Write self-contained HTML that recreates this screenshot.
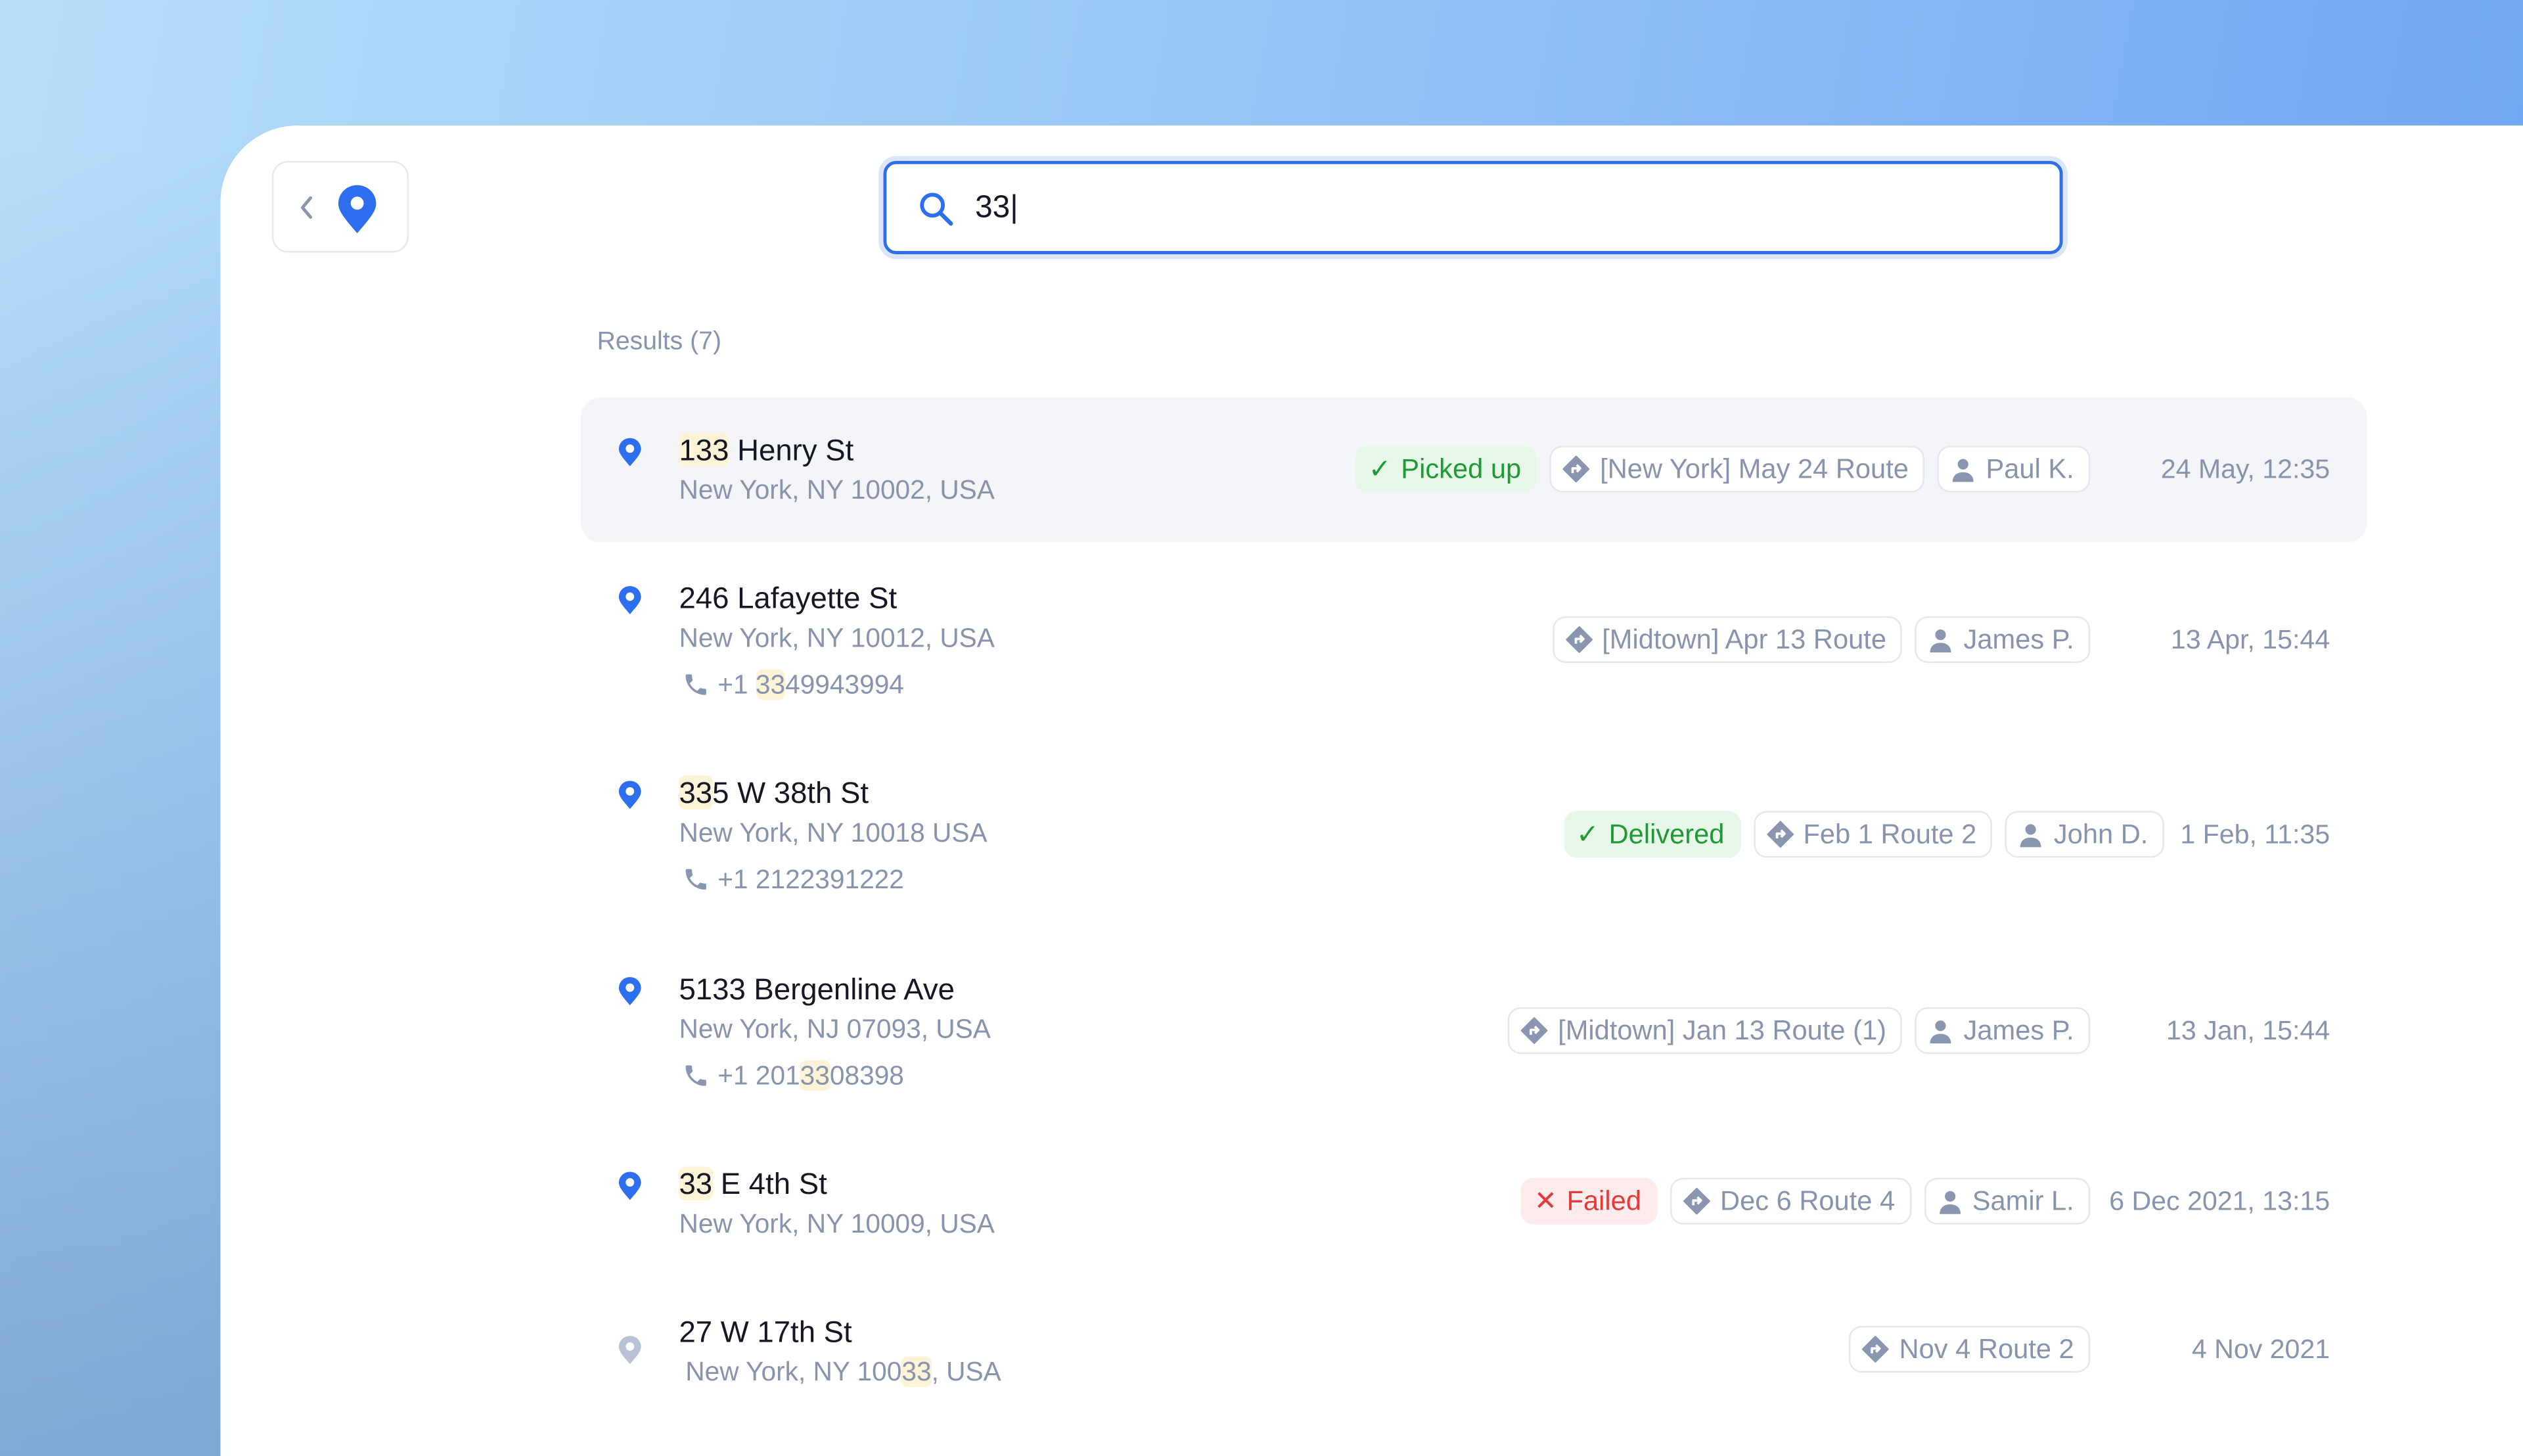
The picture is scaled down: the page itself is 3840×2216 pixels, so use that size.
<!DOCTYPE html>
<html><head><meta charset="utf-8"><style>
html,body{margin:0;padding:0;width:3840px;height:2216px;overflow:hidden}
body{font-family:"Liberation Sans",sans-serif}
#s{position:absolute;left:0;top:0;width:1568px;height:905px;transform:scale(2.44898);transform-origin:0 0;overflow:hidden;
background:linear-gradient(100deg,#b5def9 0%,#9cc8f7 40%,#6ca2f2 100%)}
#shade{position:absolute;left:0;top:0;width:1568px;height:905px;background:linear-gradient(180deg,rgba(0,0,0,0) 10%,rgba(60,100,160,.4) 100%)}
#card{position:absolute;left:137px;top:78px;width:1431px;height:827px;background:#fff;border-top-left-radius:48px}
.abs{position:absolute}
.back{left:169px;top:100px;width:85px;height:57px;border:1.5px solid #e6e9f1;border-radius:10px;box-sizing:border-box}
.search{left:549px;top:100px;width:733px;height:58px;border:2px solid #2f6fea;border-radius:8px;box-sizing:border-box;box-shadow:0 0 0 3px #dbe6fb}
.res{left:371px;top:204px;font-size:16px;color:#8893ad}
.hl{left:361px;top:247px;width:1110px;height:90px;background:#f4f5f9;border-radius:12px}
.t{font-size:18.6px;color:#151824;white-space:nowrap}
.sub{font-size:16.6px;color:#8893ad;white-space:nowrap}
.mk{background:#fdf3d6;border-radius:4px}
.tags{position:absolute;right:269px;display:flex;gap:8px;height:29px;align-items:center}
.tag{height:29px;box-sizing:border-box;border:1.5px solid #e4e8f0;border-radius:8px;padding:0 9px 0 7px;display:flex;align-items:center;gap:6px;font-size:17px;color:#8893ad;white-space:nowrap;background:#fff}
.ok{background:#e7f7e8;border-color:#e7f7e8;color:#1f9a36}
.bad{background:#fdeceb;border-color:#fdeceb;color:#e5393a}
.date{position:absolute;right:120px;font-size:16.8px;color:#8893ad;white-space:nowrap;text-align:right}
.pin{position:absolute;left:384px}
</style></head><body>
<div id="s">
<div id="shade"></div>
<div id="card"></div>
<div class="abs back">
 <svg class="abs" style="left:16px;top:20px" width="10" height="16" viewBox="0 0 10 16"><path d="M7 2 L2 8 L7 14" fill="none" stroke="#8a96b0" stroke-width="2" stroke-linecap="round" stroke-linejoin="round"/></svg>
 <svg class="abs" style="left:39px;top:13px" width="26" height="32" viewBox="0 0 24 30"><path d="M12 1C5.9 1 1 5.8 1 11.7c0 4.5 3.5 8.6 11 17.3 7.5-8.7 11-12.8 11-17.3C23 5.8 18.1 1 12 1z" fill="#2d6ff0"/><circle cx="12" cy="11.5" r="3.8" fill="#fff"/></svg>
</div>
<div class="abs search">
 <svg class="abs" style="left:20px;top:17px" width="22" height="22" viewBox="0 0 22 22"><circle cx="8.5" cy="8.5" r="6.5" fill="none" stroke="#2d6ff0" stroke-width="2.4"/><path d="M13.5 13.5L20 20" stroke="#2d6ff0" stroke-width="2.6" stroke-linecap="round"/></svg>
 <div class="abs" style="left:55px;top:16px;font-size:19.5px;color:#151824">33<span style="font-weight:300">|</span></div>
</div>
<div class="abs res">Results (7)</div>
<div class="abs hl"></div>

<!-- Row 1 -->
<svg class="pin" style="top:271px" width="15" height="20" viewBox="0 0 24 30"><path d="M12 1C5.9 1 1 5.8 1 11.7c0 4.5 3.5 8.6 11 17.3 7.5-8.7 11-12.8 11-17.3C23 5.8 18.1 1 12 1z" fill="#2d6ff0"/><circle cx="12" cy="11.5" r="4.2" fill="#fff"/></svg>
<div class="abs t" style="left:422px;top:269px"><span class="mk">133</span> Henry St</div>
<div class="abs sub" style="left:422px;top:295px">New York, NY 10002, USA</div>
<div class="tags" style="top:277px">
 <div class="tag ok"><span>✓</span>Picked up</div>
 <div class="tag"><svg width="17" height="17" viewBox="0 0 20 20"><path d="M10 1L19 10 10 19 1 10z" fill="#8a96b0" stroke="#8a96b0" stroke-linejoin="round" stroke-width="1.5"/><path d="M7.5 13v-3.5h5M10.5 7l2.5 2.5-2.5 2.5" fill="none" stroke="#fff" stroke-width="1.8" stroke-linejoin="round"/></svg>[New York] May 24 Route</div>
 <div class="tag"><svg width="16" height="16" viewBox="0 0 16 16"><circle cx="8" cy="4.5" r="3.3" fill="#8a96b0"/><path d="M1.5 15.5c0-4 2.8-6 6.5-6s6.5 2 6.5 6z" fill="#8a96b0"/></svg>Paul K.</div>
</div>
<div class="date" style="top:282px">24 May, 12:35</div>

<!-- Row 2 -->
<svg class="pin" style="top:363px" width="15" height="20" viewBox="0 0 24 30"><path d="M12 1C5.9 1 1 5.8 1 11.7c0 4.5 3.5 8.6 11 17.3 7.5-8.7 11-12.8 11-17.3C23 5.8 18.1 1 12 1z" fill="#2d6ff0"/><circle cx="12" cy="11.5" r="4.2" fill="#fff"/></svg>
<div class="abs t" style="left:422px;top:361px">246 Lafayette St</div>
<div class="abs sub" style="left:422px;top:387px">New York, NY 10012, USA</div>
<div class="abs sub" style="left:424px;top:416px"><svg width="17" height="17" viewBox="0 0 24 24" style="vertical-align:-3px;margin-right:5px"><path d="M6.6 10.8c1.4 2.8 3.8 5.1 6.6 6.6l2.2-2.2c.3-.3.7-.4 1-.2 1.1.4 2.3.6 3.6.6.6 0 1 .4 1 1V20c0 .6-.4 1-1 1C10.6 21 3 13.4 3 4c0-.6.4-1 1-1h3.5c.6 0 1 .4 1 1 0 1.3.2 2.5.6 3.6.1.3 0 .7-.2 1z" fill="#8a96b0"/></svg>+1 <span class="mk">33</span>49943994</div>
<div class="tags" style="top:383px">
 <div class="tag"><svg width="17" height="17" viewBox="0 0 20 20"><path d="M10 1L19 10 10 19 1 10z" fill="#8a96b0" stroke="#8a96b0" stroke-linejoin="round" stroke-width="1.5"/><path d="M7.5 13v-3.5h5M10.5 7l2.5 2.5-2.5 2.5" fill="none" stroke="#fff" stroke-width="1.8" stroke-linejoin="round"/></svg>[Midtown] Apr 13 Route</div>
 <div class="tag"><svg width="16" height="16" viewBox="0 0 16 16"><circle cx="8" cy="4.5" r="3.3" fill="#8a96b0"/><path d="M1.5 15.5c0-4 2.8-6 6.5-6s6.5 2 6.5 6z" fill="#8a96b0"/></svg>James P.</div>
</div>
<div class="date" style="top:388px">13 Apr, 15:44</div>

<!-- Row 3 -->
<svg class="pin" style="top:484px" width="15" height="20" viewBox="0 0 24 30"><path d="M12 1C5.9 1 1 5.8 1 11.7c0 4.5 3.5 8.6 11 17.3 7.5-8.7 11-12.8 11-17.3C23 5.8 18.1 1 12 1z" fill="#2d6ff0"/><circle cx="12" cy="11.5" r="4.2" fill="#fff"/></svg>
<div class="abs t" style="left:422px;top:482px"><span class="mk">33</span>5 W 38th St</div>
<div class="abs sub" style="left:422px;top:508px">New York, NY 10018 USA</div>
<div class="abs sub" style="left:424px;top:537px"><svg width="17" height="17" viewBox="0 0 24 24" style="vertical-align:-3px;margin-right:5px"><path d="M6.6 10.8c1.4 2.8 3.8 5.1 6.6 6.6l2.2-2.2c.3-.3.7-.4 1-.2 1.1.4 2.3.6 3.6.6.6 0 1 .4 1 1V20c0 .6-.4 1-1 1C10.6 21 3 13.4 3 4c0-.6.4-1 1-1h3.5c.6 0 1 .4 1 1 0 1.3.2 2.5.6 3.6.1.3 0 .7-.2 1z" fill="#8a96b0"/></svg>+1 2122391222</div>
<div class="tags" style="top:504px;right:223px">
 <div class="tag ok"><span>✓</span>Delivered</div>
 <div class="tag"><svg width="17" height="17" viewBox="0 0 20 20"><path d="M10 1L19 10 10 19 1 10z" fill="#8a96b0" stroke="#8a96b0" stroke-linejoin="round" stroke-width="1.5"/><path d="M7.5 13v-3.5h5M10.5 7l2.5 2.5-2.5 2.5" fill="none" stroke="#fff" stroke-width="1.8" stroke-linejoin="round"/></svg>Feb 1 Route 2</div>
 <div class="tag"><svg width="16" height="16" viewBox="0 0 16 16"><circle cx="8" cy="4.5" r="3.3" fill="#8a96b0"/><path d="M1.5 15.5c0-4 2.8-6 6.5-6s6.5 2 6.5 6z" fill="#8a96b0"/></svg>John D.</div>
</div>
<div class="date" style="top:509px">1 Feb, 11:35</div>

<!-- Row 4 -->
<svg class="pin" style="top:606px" width="15" height="20" viewBox="0 0 24 30"><path d="M12 1C5.9 1 1 5.8 1 11.7c0 4.5 3.5 8.6 11 17.3 7.5-8.7 11-12.8 11-17.3C23 5.8 18.1 1 12 1z" fill="#2d6ff0"/><circle cx="12" cy="11.5" r="4.2" fill="#fff"/></svg>
<div class="abs t" style="left:422px;top:604px">5133 Bergenline Ave</div>
<div class="abs sub" style="left:422px;top:630px">New York, NJ 07093, USA</div>
<div class="abs sub" style="left:424px;top:659px"><svg width="17" height="17" viewBox="0 0 24 24" style="vertical-align:-3px;margin-right:5px"><path d="M6.6 10.8c1.4 2.8 3.8 5.1 6.6 6.6l2.2-2.2c.3-.3.7-.4 1-.2 1.1.4 2.3.6 3.6.6.6 0 1 .4 1 1V20c0 .6-.4 1-1 1C10.6 21 3 13.4 3 4c0-.6.4-1 1-1h3.5c.6 0 1 .4 1 1 0 1.3.2 2.5.6 3.6.1.3 0 .7-.2 1z" fill="#8a96b0"/></svg>+1 201<span class="mk">33</span>08398</div>
<div class="tags" style="top:626px">
 <div class="tag"><svg width="17" height="17" viewBox="0 0 20 20"><path d="M10 1L19 10 10 19 1 10z" fill="#8a96b0" stroke="#8a96b0" stroke-linejoin="round" stroke-width="1.5"/><path d="M7.5 13v-3.5h5M10.5 7l2.5 2.5-2.5 2.5" fill="none" stroke="#fff" stroke-width="1.8" stroke-linejoin="round"/></svg>[Midtown] Jan 13 Route (1)</div>
 <div class="tag"><svg width="16" height="16" viewBox="0 0 16 16"><circle cx="8" cy="4.5" r="3.3" fill="#8a96b0"/><path d="M1.5 15.5c0-4 2.8-6 6.5-6s6.5 2 6.5 6z" fill="#8a96b0"/></svg>James P.</div>
</div>
<div class="date" style="top:631px">13 Jan, 15:44</div>

<!-- Row 5 -->
<svg class="pin" style="top:727px" width="15" height="20" viewBox="0 0 24 30"><path d="M12 1C5.9 1 1 5.8 1 11.7c0 4.5 3.5 8.6 11 17.3 7.5-8.7 11-12.8 11-17.3C23 5.8 18.1 1 12 1z" fill="#2d6ff0"/><circle cx="12" cy="11.5" r="4.2" fill="#fff"/></svg>
<div class="abs t" style="left:422px;top:725px"><span class="mk">33</span> E 4th St</div>
<div class="abs sub" style="left:422px;top:751px">New York, NY 10009, USA</div>
<div class="tags" style="top:732px">
 <div class="tag bad"><span style="font-size:17px">✕</span>Failed</div>
 <div class="tag"><svg width="17" height="17" viewBox="0 0 20 20"><path d="M10 1L19 10 10 19 1 10z" fill="#8a96b0" stroke="#8a96b0" stroke-linejoin="round" stroke-width="1.5"/><path d="M7.5 13v-3.5h5M10.5 7l2.5 2.5-2.5 2.5" fill="none" stroke="#fff" stroke-width="1.8" stroke-linejoin="round"/></svg>Dec 6 Route 4</div>
 <div class="tag"><svg width="16" height="16" viewBox="0 0 16 16"><circle cx="8" cy="4.5" r="3.3" fill="#8a96b0"/><path d="M1.5 15.5c0-4 2.8-6 6.5-6s6.5 2 6.5 6z" fill="#8a96b0"/></svg>Samir L.</div>
</div>
<div class="date" style="top:737px">6 Dec 2021, 13:15</div>

<!-- Row 6 -->
<svg class="pin" style="top:829px" width="15" height="20" viewBox="0 0 24 30"><path d="M12 1C5.9 1 1 5.8 1 11.7c0 4.5 3.5 8.6 11 17.3 7.5-8.7 11-12.8 11-17.3C23 5.8 18.1 1 12 1z" fill="#b9c2d4"/><circle cx="12" cy="11.5" r="4.2" fill="#fff"/></svg>
<div class="abs t" style="left:422px;top:817px">27 W 17th St</div>
<div class="abs sub" style="left:426px;top:843px">New York, NY 100<span class="mk">33</span>, USA</div>
<div class="tags" style="top:824px">
 <div class="tag"><svg width="17" height="17" viewBox="0 0 20 20"><path d="M10 1L19 10 10 19 1 10z" fill="#8a96b0" stroke="#8a96b0" stroke-linejoin="round" stroke-width="1.5"/><path d="M7.5 13v-3.5h5M10.5 7l2.5 2.5-2.5 2.5" fill="none" stroke="#fff" stroke-width="1.8" stroke-linejoin="round"/></svg>Nov 4 Route 2</div>
</div>
<div class="date" style="top:829px">4 Nov 2021</div>
</div>
</body></html>
